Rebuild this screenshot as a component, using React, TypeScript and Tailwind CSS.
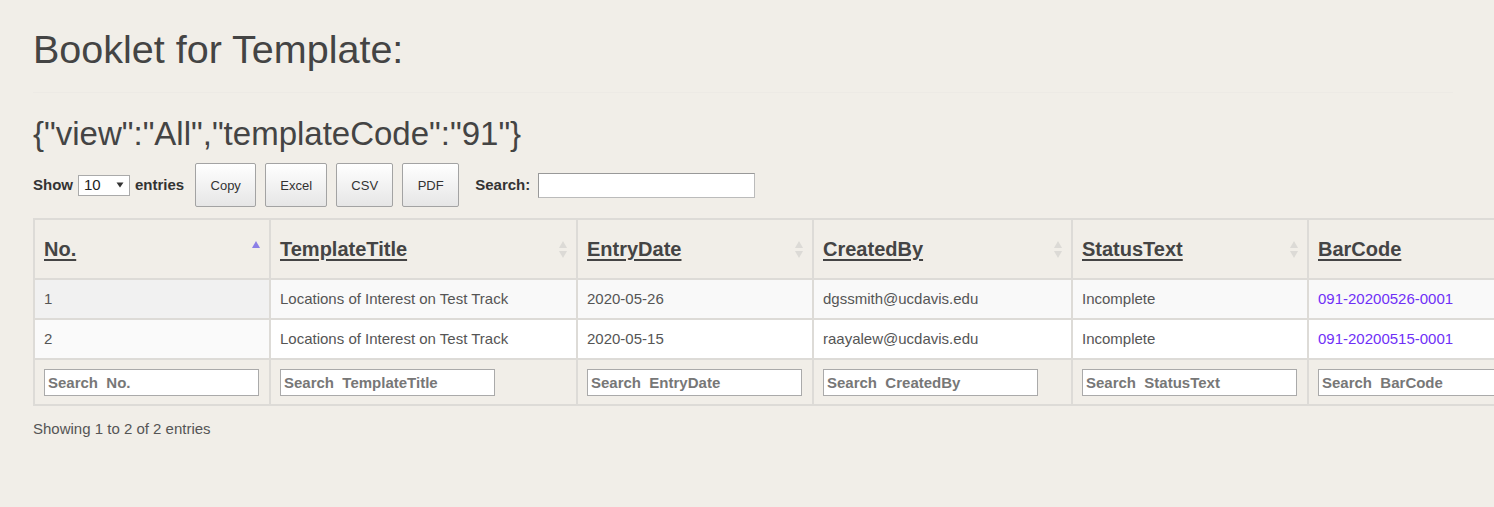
import React from 'react';

interface Entry {
  no: number;
  title: string;
  entryDate: string;
  createdBy: string;
  status: string;
  barCode: string;
}

const entries: Entry[] = [
  { no: 1, title: 'Locations of Interest on Test Track', entryDate: '2020-05-26', createdBy: 'dgssmith@ucdavis.edu', status: 'Incomplete', barCode: '091-20200526-0001' },
  { no: 2, title: 'Locations of Interest on Test Track', entryDate: '2020-05-15', createdBy: 'raayalew@ucdavis.edu', status: 'Incomplete', barCode: '091-20200515-0001' },
];

const columns = [
  { key: 'no', label: 'No.', width: 'w-[236px]' },
  { key: 'title', label: 'TemplateTitle', width: 'w-[307px]' },
  { key: 'entryDate', label: 'EntryDate', width: 'w-[236px]' },
  { key: 'createdBy', label: 'CreatedBy', width: 'w-[259px]' },
  { key: 'status', label: 'StatusText', width: 'w-[236px]' },
  { key: 'barCode', label: 'BarCode', width: 'w-[260px]' },
];

const SortIcon = ({ active }: { active: boolean }) =>
  active ? (
    <svg width="10" height="10" viewBox="0 0 10 10" className="absolute right-[8px] top-[20px]">
      <path d="M5 1 L9 8 L1 8 Z" fill="#8b7fe6" />
    </svg>
  ) : (
    <svg width="10" height="20" viewBox="0 0 10 20" className="absolute right-[8px] top-[19px]">
      <path d="M5 2 L9 9 L1 9 Z" fill="#dcdad6" />
      <path d="M5 19 L9 12 L1 12 Z" fill="#dcdad6" />
    </svg>
  );

const ToolButton = ({ label, width }: { label: string; width: string }) => (
  <button
    className={`${width} h-[44px] rounded-[2px] border border-[#a3a3a3] bg-gradient-to-b from-white to-[#e6e6e6] text-[13px] font-normal text-[#333] leading-none`}
  >
    {label}
  </button>
);

export default function App() {
  return (
    <div className="min-h-[507px] w-full overflow-hidden bg-[#f1eee8] font-['Liberation_Sans',Arial,sans-serif] text-[#555]">
      <div className="pl-[33px] pt-[27px]">
        <h1 className="text-[39.5px] leading-[44px] text-[#444] whitespace-nowrap">Booklet for Template:</h1>
        <hr className="mt-[21px] w-[1420px] border-t border-[#edeae5]" />
        <h2 className="mt-[22px] text-[33px] leading-[38px] text-[#444] whitespace-nowrap">
          {'{"view":"All","templateCode":"91"}'}
        </h2>

        {/* toolbar */}
        <div className="mt-[10px] flex items-center h-[44px] text-[15px] text-[#333]">
          <label className="flex items-center font-bold">
            Show
            <span className="ml-[5px] mr-[5px] flex h-[21px] w-[52px] items-center justify-between border border-[#aaa] bg-white pl-[5px] pr-[5px] text-[15px] font-normal text-[#222]">
              10
              <svg width="8" height="6" viewBox="0 0 8 6">
                <path d="M0.5 0.5 L7.5 0.5 L4 5.5 Z" fill="#333" />
              </svg>
            </span>
            entries
          </label>
          <div className="ml-[11px] flex gap-[9px]">
            <ToolButton label="Copy" width="w-[61px]" />
            <ToolButton label="Excel" width="w-[62px]" />
            <ToolButton label="CSV" width="w-[57px]" />
            <ToolButton label="PDF" width="w-[57px]" />
          </div>
          <label className="ml-[16px] flex items-center font-bold">
            Search:
            <input className="ml-[8px] h-[25px] w-[217px] border border-[#bbb] border-t-[#999] border-l-[#999] bg-white outline-none" />
          </label>
        </div>

        {/* table */}
        <table className="mt-[11px] w-[1534px] min-w-[1534px] table-fixed border-collapse border-2 border-[#dddbd7] text-[15px]">
          <thead>
            <tr>
              {columns.map((c) => (
                <th
                  key={c.key}
                  className={`${c.width} relative h-[60px] border-2 border-[#dddbd7] bg-[#f1eee8] px-[9px] text-left text-[20px] font-bold text-[#444]`}
                >
                  <span className="underline underline-offset-[3px] decoration-[1.5px]">{c.label}</span>
                  {c.key !== 'barCode' && <SortIcon active={c.key === 'no'} />}
                </th>
              ))}
            </tr>
          </thead>
          <tbody>
            {entries.map((e, i) => (
              <tr key={e.no} className={i === 0 ? 'bg-[#f9f9f9]' : 'bg-white'}>
                <td className={`h-[40px] border-2 border-[#dddbd7] px-[9px] ${i === 0 ? 'bg-[#f1f1f1]' : 'bg-[#fafafa]'}`}>{e.no}</td>
                <td className="border-2 border-[#dddbd7] px-[9px] whitespace-nowrap">{e.title}</td>
                <td className="border-2 border-[#dddbd7] px-[9px]">{e.entryDate}</td>
                <td className="border-2 border-[#dddbd7] px-[9px]">{e.createdBy}</td>
                <td className="border-2 border-[#dddbd7] px-[9px]">{e.status}</td>
                <td className="border-2 border-[#dddbd7] px-[9px] text-[#6f30f7] whitespace-nowrap">{e.barCode}</td>
              </tr>
            ))}
          </tbody>
          <tfoot>
            <tr>
              {columns.map((c) => (
                <th key={c.key} className="h-[46px] border-2 border-[#dddbd7] bg-[#f1eee8] px-[9px] text-left">
                  <input
                    placeholder={`Search  ${c.label}`}
                    className="h-[27px] w-[215px] border border-[#aaa] bg-white px-[3px] text-[15px] font-bold text-[#555] outline-none placeholder:text-[#777] placeholder:font-bold"
                  />
                </th>
              ))}
            </tr>
          </tfoot>
        </table>

        <div className="mt-[12px] text-[15px] text-[#555]">Showing 1 to 2 of 2 entries</div>
      </div>
    </div>
  );
}
